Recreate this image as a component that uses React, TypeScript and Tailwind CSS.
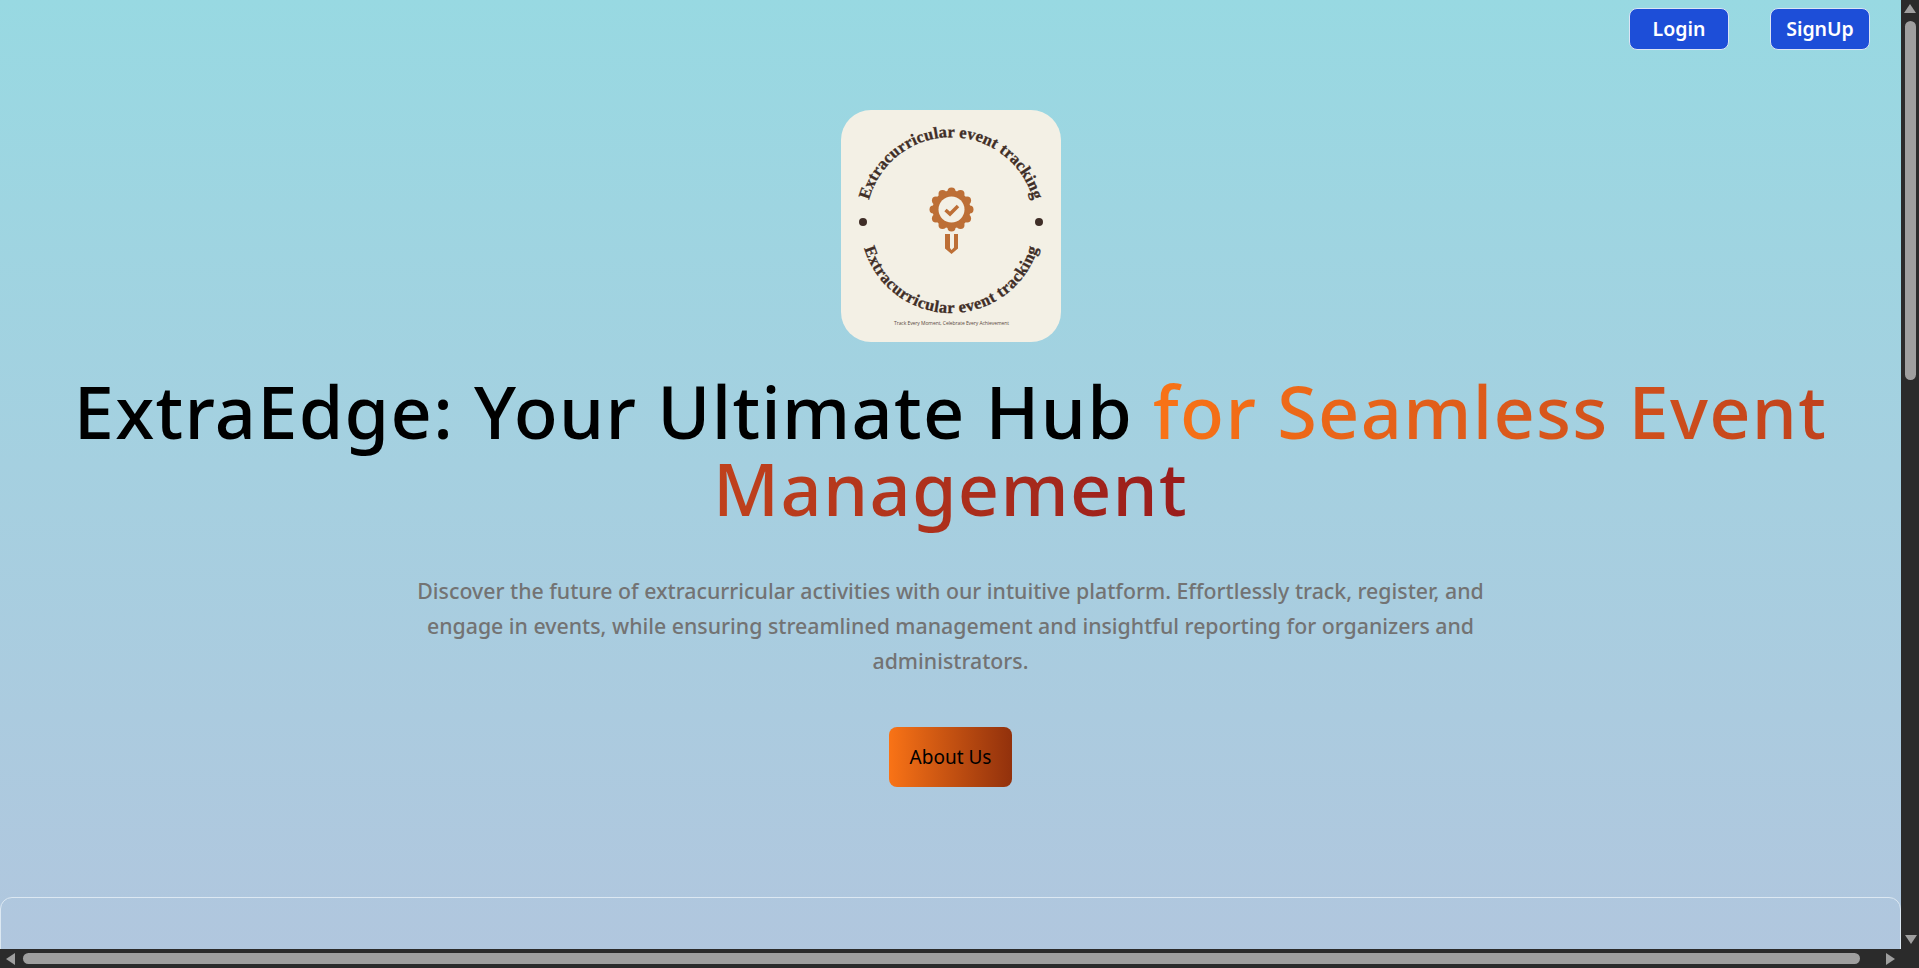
const sans = "font-['Noto_Sans','Open_Sans',sans-serif]";

const scallops = Array.from({ length: 12 }, (_, i) => (i * Math.PI) / 6);

function Logo() {
  return (
    <div className="w-[220px] h-[232px] rounded-[30px] bg-[#f3f0e5] overflow-hidden">
      <svg viewBox="0 0 220 232" className="w-full h-full">
        <defs>
          <path id="arcTop" d="M 28.500 88 A 85 85 0 0 1 191.500 88" fill="none" />
          <path id="arcBottom" d="M 22 134 A 90.600 90.600 0 0 0 198 134" fill="none" />
        </defs>
        <text fontFamily="'Liberation Serif', serif" fontWeight="700" fontSize="16.500" fill="#3f2e27" stroke="#3f2e27" strokeWidth="0.3">
          <textPath href="#arcTop" startOffset="50%" textAnchor="middle" textLength="222">Extracurricular event tracking</textPath>
        </text>
        <text fontFamily="'Liberation Serif', serif" fontWeight="700" fontSize="16.500" fill="#3f2e27" stroke="#3f2e27" strokeWidth="0.3">
          <textPath href="#arcBottom" startOffset="50%" textAnchor="middle" textLength="232">Extracurricular event tracking</textPath>
        </text>
        <circle cx="22" cy="112" r="4" fill="#3f2e27" />
        <circle cx="198" cy="112" r="4" fill="#3f2e27" />
        {/* rosette badge */}
        <circle cx="110.500" cy="99.500" r="19" fill="#bd6f36" />
        {scallops.map((a) => (
          <circle key={a} cx={110.5 + 18 * Math.cos(a)} cy={99.5 + 18 * Math.sin(a)} r="4" fill="#bd6f36" />
        ))}
        <circle cx="110.500" cy="99.500" r="13" fill="#f3f0e5" />
        <path d="M104.500 100l4.500 4 8-8" fill="none" stroke="#bd6f36" strokeWidth="3.500" />
        <path d="M104 124h5v14l1.500 2 2.500-2.500V124h4v14.500l-6.500 5.500-6.500-5.500z" fill="#bd6f36" />
        <text x="110.500" y="214.500" textAnchor="middle" textLength="115" fontFamily="'Open Sans', sans-serif" fontSize="5" fill="#5b4a42">
          Track Every Moment, Celebrate Every Achievement
        </text>
      </svg>
    </div>
  );
}

function Scrollbars() {
  return (
    <>
      <div className="absolute top-0 right-0 bottom-0 w-[18px] bg-[#2b2b2b]">
        <div className="mx-auto mt-[4px] w-0 h-0 border-x-[6.5px] border-x-transparent border-b-[9px] border-b-[#9f9f9f]" />
        <div className="mx-auto mt-[8px] w-[11px] h-[359px] rounded-full bg-[#9f9f9f]" />
      </div>
      <div className="absolute right-[2px] bottom-[24px] w-0 h-0 border-x-[6.5px] border-x-transparent border-t-[9px] border-t-[#9f9f9f]" />
      <div className="absolute left-0 right-0 bottom-0 h-[19px] bg-[#2b2b2b] flex items-center">
        <div className="ml-[6px] w-0 h-0 border-y-[6px] border-y-transparent border-r-[9px] border-r-[#9f9f9f]" />
        <div className="ml-[8px] w-[1837px] h-[11px] rounded-full bg-[#9f9f9f]" />
        <div className="ml-[26px] w-0 h-0 border-y-[6px] border-y-transparent border-l-[9px] border-l-[#9f9f9f]" />
      </div>
    </>
  );
}

export default function App() {
  return (
    <div className={`relative h-screen overflow-hidden bg-gradient-to-b from-[#98d9e2] to-[#b1c6de] ${sans}`}>
      <div className="flex justify-end gap-[41px] pt-2 pr-[49px]">
        <button className="w-[100px] h-[42px] rounded-lg border border-[#dbe4f5] bg-[#1d4ed8] text-white text-[19.500px] font-semibold">Login</button>
        <button className="w-[100px] h-[42px] rounded-lg border border-[#dbe4f5] bg-[#1d4ed8] text-white text-[19.500px] font-semibold">SignUp</button>
      </div>

      <main className="flex flex-col items-center pr-[18px] pt-[60px]">
        <Logo />
        <h1 className="mt-[31px] w-full px-[40px] text-center text-[72px] leading-[77px] font-medium tracking-[0.018em] text-black">
          ExtraEdge: Your Ultimate Hub{" "}
          <span className="bg-gradient-to-r from-[#f97316] to-[#991b1b] bg-clip-text text-transparent">
            for Seamless Event Management
          </span>
        </h1>
        <p className="mt-[46px] w-[1100px] text-center text-[21.300px] leading-[35px] font-medium text-[#737373]">
          Discover the future of extracurricular activities with our intuitive platform. Effortlessly track, register, and engage in events, while ensuring streamlined management and insightful reporting for organizers and administrators.
        </p>
        <button className="mt-[49px] w-[123px] h-[60px] rounded-lg bg-gradient-to-r from-[#f97316] to-[#92310c] text-black text-[19px]">About Us</button>
      </main>

      <div className="absolute left-0 right-[18px] top-[897px] h-[100px] rounded-t-xl border border-[#dce8f2]" />
      <Scrollbars />
    </div>
  );
}
